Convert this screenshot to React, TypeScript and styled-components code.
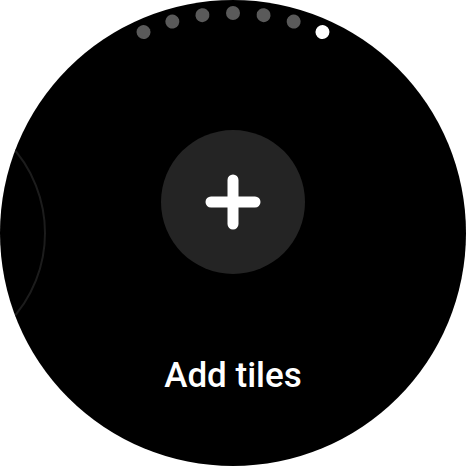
import React from "react";
import styled, { createGlobalStyle } from "styled-components";

const PAGE_COUNT = 7;
const ACTIVE_PAGE = 6;
const DOT_RADIUS = 220;
const DOT_STEP = 8;

const GlobalStyle = createGlobalStyle`
  html, body {
    margin: 0;
    padding: 0;
    background: #ffffff;
  }
  body {
    font-family: Roboto, "Liberation Sans", sans-serif;
  }
`;

function App() {
  return (
    <>
      <GlobalStyle />
      <StyledWatch>
        <StyledPeekTile />
        <StyledIndicator>
          {Array.from({ length: PAGE_COUNT }).map((_, i) => {
            const angle = (i - (PAGE_COUNT - 1) / 2) * DOT_STEP;
            return (
              <StyledDot
                key={i}
                $active={i === ACTIVE_PAGE}
                style={{
                  transform: `rotate(${angle}deg) translateY(-${DOT_RADIUS}px)`,
                }}
              />
            );
          })}
        </StyledIndicator>
        <StyledContent>
          <StyledAddButton type="button" aria-label="Add tiles">
            <svg width="56" height="56" viewBox="0 0 56 56">
              <path
                d="M28 6 V50 M6 28 H50"
                stroke="#ffffff"
                strokeWidth="11"
                strokeLinecap="round"
                fill="none"
              />
            </svg>
          </StyledAddButton>
          <StyledLabel>Add tiles</StyledLabel>
        </StyledContent>
      </StyledWatch>
    </>
  );
}

export default App;

const StyledWatch = styled.main`
  width: 466px;
  height: 466px;
  border-radius: 50%;
  background-color: #000000;
  overflow: hidden;
  position: relative;
`;

const StyledPeekTile = styled.div`
  position: absolute;
  width: 256px;
  height: 256px;
  left: -214px;
  top: 103px;
  border: 2px solid #1c1c1c;
  border-radius: 50%;
`;

const StyledIndicator = styled.div`
  position: absolute;
  left: 233px;
  top: 233px;
  width: 0;
  height: 0;
`;

const StyledDot = styled.span<{ $active: boolean }>`
  position: absolute;
  left: -7px;
  top: -7px;
  width: 14px;
  height: 14px;
  border-radius: 50%;
  background-color: ${({ $active }) => ($active ? "#ffffff" : "#5a5a5a")};
  transform-origin: 7px 7px;
`;

const StyledContent = styled.div`
  display: flex;
  flex-direction: column;
  align-items: center;
  padding-top: 130px;
`;

const StyledAddButton = styled.button`
  width: 144px;
  height: 144px;
  border: none;
  border-radius: 50%;
  background-color: #242424;
  display: flex;
  align-items: center;
  justify-content: center;
  padding: 0;
  cursor: pointer;
`;

const StyledLabel = styled.div`
  margin-top: 82px;
  font-size: 35px;
  line-height: 40px;
  font-weight: 500;
  color: #ffffff;
`;
